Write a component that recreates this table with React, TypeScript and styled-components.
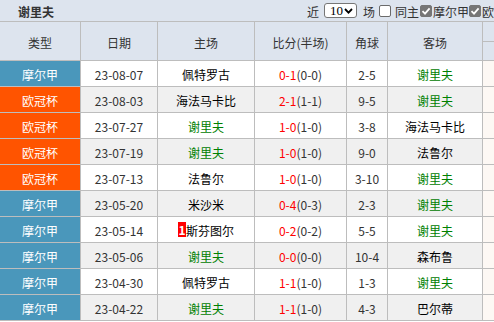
import React from 'react';
import styled, { createGlobalStyle } from 'styled-components';

const GlobalStyle = createGlobalStyle`
  html, body {
    margin: 0;
    padding: 0;
    overflow: hidden;
    background: #ffffff;
  }
  body {
    font-family: "Noto Sans CJK SC", "Liberation Sans", sans-serif;
    font-size: 12px;
    color: #333333;
  }
`;

const Panel = styled.div`
  width: 494px;
  overflow: hidden;
`;

const TopBar = styled.div`
  display: flex;
  align-items: center;
  height: 21px;
  padding-left: 18px;
  background: #dde4ee;
  border-bottom: 1px solid #bdbdbd;
  white-space: nowrap;
`;

const Title = styled.div`
  flex: 0 0 289px;
  font-weight: bold;
  line-height: 21px;
  padding-top: 2px;
  color: #333;
`;

const Controls = styled.div`
  display: flex;
  align-items: center;
  flex-shrink: 0;
  line-height: 21px;
`;

const Label = styled.span<{ $gap?: number }>`
  margin-right: ${p => p.$gap ?? 0}px;
  padding-top: 2px;
`;

const SelectBox = styled.div`
  display: flex;
  align-items: center;
  justify-content: space-between;
  box-sizing: border-box;
  width: 33px;
  height: 15px;
  margin-right: 6px;
  padding: 0 3px 0 5px;
  background: #fff;
  border: 1px solid #767676;
  border-radius: 3px;
  font-family: "Liberation Serif", serif;
  font-size: 13px;
  color: #000;
`;

const Check = styled.span<{ $on?: boolean; $gap?: number }>`
  display: inline-flex;
  align-items: center;
  justify-content: center;
  box-sizing: border-box;
  width: 12px;
  height: 12px;
  margin-right: ${p => p.$gap ?? 0}px;
  border-radius: 2px;
  border: 1px solid ${p => (p.$on ? '#767676' : '#6b6b6b')};
  background: ${p => (p.$on ? '#767676' : '#ffffff')};
`;

const Grid = styled.div`
  display: grid;
  grid-template-columns: 81px 77px 97px 92px 41px 95px 1fr;
`;

const HeadCell = styled.div`
  box-sizing: border-box;
  height: 39px;
  display: flex;
  align-items: center;
  justify-content: center;
  padding-top: 3px;
  background: #dde4ee;
  border-right: 1px solid #bdbdbd;
  border-bottom: 1px solid #bdbdbd;
  color: #333;
  white-space: nowrap;
`;

const HeadStack = styled.div`
  box-sizing: border-box;
  height: 39px;
  display: flex;
  flex-direction: column;
  background: #dde4ee;
  border-bottom: 1px solid #bdbdbd;
`;

const HeadHalf = styled.div`
  flex: 1;
  &:first-child {
    border-bottom: 1px solid #bdbdbd;
  }
`;

const Cell = styled.div<{ $alt?: boolean }>`
  box-sizing: border-box;
  height: 26px;
  display: flex;
  align-items: center;
  justify-content: center;
  padding-top: 2px;
  background: ${p => (p.$alt ? '#f0f0f0' : '#ffffff')};
  border-right: 1px solid #bdbdbd;
  border-bottom: 1px solid #bdbdbd;
  white-space: nowrap;
  color: #333;
`;

const TypeCell = styled(Cell)<{ $league: string }>`
  background: ${p => (p.$league === '欧冠杯' ? '#ff5400' : '#4a97bb')};
  color: #ffffff;
`;

const Team = styled.span<{ $own?: boolean }>`
  color: ${p => (p.$own ? '#008000' : '#000000')};
`;

const Badge = styled.span`
  display: inline-block;
  width: 8px;
  height: 15px;
  line-height: 15px;
  background: #ff0000;
  color: #ffffff;
  font-weight: bold;
  text-align: center;
  margin-top: -2px;
`;

const Full = styled.span`
  color: #ff0000;
`;

const Edge = styled.div`
  box-sizing: border-box;
  height: 26px;
  background: #fdf8f4;
  border-bottom: 1px solid #bdbdbd;
`;

type Match = {
  league: string;
  date: string;
  home: string;
  badge?: string;
  ft: string;
  ht: string;
  corner: string;
  away: string;
};

const matches: Match[] = [
  { league: '摩尔甲', date: '23-08-07', home: '佩特罗古', ft: '0-1', ht: '0-0', corner: '2-5', away: '谢里夫' },
  { league: '欧冠杯', date: '23-08-03', home: '海法马卡比', ft: '2-1', ht: '1-1', corner: '9-5', away: '谢里夫' },
  { league: '欧冠杯', date: '23-07-27', home: '谢里夫', ft: '1-0', ht: '1-0', corner: '3-8', away: '海法马卡比' },
  { league: '欧冠杯', date: '23-07-19', home: '谢里夫', ft: '1-0', ht: '1-0', corner: '9-0', away: '法鲁尔' },
  { league: '欧冠杯', date: '23-07-13', home: '法鲁尔', ft: '1-0', ht: '1-0', corner: '3-10', away: '谢里夫' },
  { league: '摩尔甲', date: '23-05-20', home: '米沙米', ft: '0-4', ht: '0-3', corner: '2-3', away: '谢里夫' },
  { league: '摩尔甲', date: '23-05-14', home: '斯芬图尔', badge: '1', ft: '0-2', ht: '0-2', corner: '5-5', away: '谢里夫' },
  { league: '摩尔甲', date: '23-05-06', home: '谢里夫', ft: '0-0', ht: '0-0', corner: '10-4', away: '森布鲁' },
  { league: '摩尔甲', date: '23-04-30', home: '佩特罗古', ft: '1-1', ht: '1-0', corner: '1-3', away: '谢里夫' },
  { league: '摩尔甲', date: '23-04-22', home: '谢里夫', ft: '1-1', ht: '1-0', corner: '4-3', away: '巴尔蒂' },
];

const OWN = '谢里夫';

const Tick = () => (
  <svg width="10" height="10" viewBox="0 0 10 10">
    <path d="M1.5 5.2 L4 7.6 L8.6 2.4" fill="none" stroke="#fff" strokeWidth="1.8" />
  </svg>
);

const Chevron = () => (
  <svg width="9" height="6" viewBox="0 0 9 6">
    <path d="M1 1 L4.5 4.6 L8 1" fill="none" stroke="#000" strokeWidth="1.8" />
  </svg>
);

const App: React.FC = () => {
  return (
    <Panel>
      <GlobalStyle />
      <TopBar>
        <Title>谢里夫</Title>
        <Controls>
          <Label $gap={5}>近</Label>
          <SelectBox>
            10
            <Chevron />
          </SelectBox>
          <Label $gap={4}>场</Label>
          <Check $gap={4} />
          <Label $gap={1}>同主</Label>
          <Check $on $gap={1}>
            <Tick />
          </Check>
          <Label>摩尔甲</Label>
          <Check $on $gap={1}>
            <Tick />
          </Check>
          <Label>欧冠杯</Label>
        </Controls>
      </TopBar>

      <Grid>
        <HeadCell>类型</HeadCell>
        <HeadCell>日期</HeadCell>
        <HeadCell>主场</HeadCell>
        <HeadCell>比分(半场)</HeadCell>
        <HeadCell>角球</HeadCell>
        <HeadCell>客场</HeadCell>
        <HeadStack>
          <HeadHalf />
          <HeadHalf />
        </HeadStack>

        {matches.map((m, i) => {
          const alt = i % 2 === 1;
          return (
            <React.Fragment key={m.date}>
              <TypeCell $league={m.league}>{m.league}</TypeCell>
              <Cell $alt={alt}>{m.date}</Cell>
              <Cell $alt={alt}>
                {m.badge && <Badge>{m.badge}</Badge>}
                <Team $own={m.home === OWN}>{m.home}</Team>
              </Cell>
              <Cell $alt={alt}>
                <Full>{m.ft}</Full>({m.ht})
              </Cell>
              <Cell $alt={alt}>{m.corner}</Cell>
              <Cell $alt={alt}>
                <Team $own={m.away === OWN}>{m.away}</Team>
              </Cell>
              <Edge />
            </React.Fragment>
          );
        })}
      </Grid>
    </Panel>
  );
};

export default App;
